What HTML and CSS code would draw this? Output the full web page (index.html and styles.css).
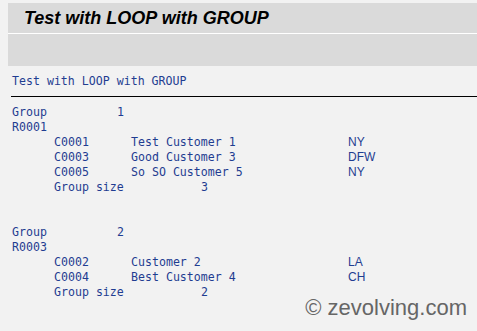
FILE: index.html
```html
<!DOCTYPE html>
<html lang="en">
<head>
  <meta charset="UTF-8">
  <title>Test with LOOP with GROUP</title>
  <link rel="stylesheet" href="styles.css">
</head>
<body>
  <div class="header">
    <div class="title-bar"><h1>Test with LOOP with GROUP</h1></div>
    <div class="tool-bar"></div>
  </div>

  <div class="list">
    <div class="row list-title">Test with LOOP with GROUP</div>
    <div class="rule"></div>

    <div class="row"><span class="c15">Group</span><span>1</span></div>
    <div class="row"><span>R0001</span></div>
    <div class="row"><span class="c6"></span><span class="c11">C0001</span><span class="c31">Test Customer 1</span><span class="region">NY</span></div>
    <div class="row"><span class="c6"></span><span class="c11">C0003</span><span class="c31">Good Customer 3</span><span class="region">DFW</span></div>
    <div class="row"><span class="c6"></span><span class="c11">C0005</span><span class="c31">So SO Customer 5</span><span class="region">NY</span></div>
    <div class="row"><span class="c6"></span><span class="c21">Group size</span><span>3</span></div>
    <div class="row"></div>
    <div class="row"></div>

    <div class="row"><span class="c15">Group</span><span>2</span></div>
    <div class="row"><span>R0003</span></div>
    <div class="row"><span class="c6"></span><span class="c11">C0002</span><span class="c31">Customer 2</span><span class="region">LA</span></div>
    <div class="row"><span class="c6"></span><span class="c11">C0004</span><span class="c31">Best Customer 4</span><span class="region">CH</span></div>
    <div class="row"><span class="c6"></span><span class="c21">Group size</span><span>2</span></div>
  </div>

  <div class="watermark">© zevolving.com</div>
</body>
</html>
```

FILE: styles.css
```css
body, html {
  margin: 0;
  padding: 0;
  background-color: #f2f2f2;
  overflow: hidden;
}

body {
  position: relative;
  height: 331px;
}

.header {
  margin: 3px 0 0 8px;
  background-color: #dadada;
}

.title-bar {
  height: 30px;
  border-bottom: 1px solid #ffffff;
  display: flex;
  align-items: center;
  padding-left: 16px;
}

.title-bar h1 {
  margin: 0;
  font-family: "Liberation Sans", Arial, sans-serif;
  font-size: 18px;
  font-weight: bold;
  font-style: italic;
  color: #000000;
}

.tool-bar {
  height: 32px;
}

.list {
  padding: 8px 0 0 12px;
  font-family: "DejaVu Sans Mono", "Liberation Mono", monospace;
  font-size: 11.6px;
  color: #1f3d91;
}

.row {
  display: flex;
  height: 15px;
  line-height: 15px;
  white-space: pre;
}

.rule {
  height: 1px;
  background-color: #000000;
  margin: 7px 0 8px -1px;
}

.c6 { width: 42px; }
.c11 { width: 77px; }
.c15 { width: 105px; }
.c21 { width: 147px; }
.c31 { width: 217px; }

.region {
  font-family: "Liberation Sans", Arial, sans-serif;
  font-size: 12px;
}

.watermark {
  position: absolute;
  right: 10px;
  bottom: 10px;
  font-family: "Liberation Sans", Arial, sans-serif;
  font-size: 22px;
  color: #666666;
}
```
